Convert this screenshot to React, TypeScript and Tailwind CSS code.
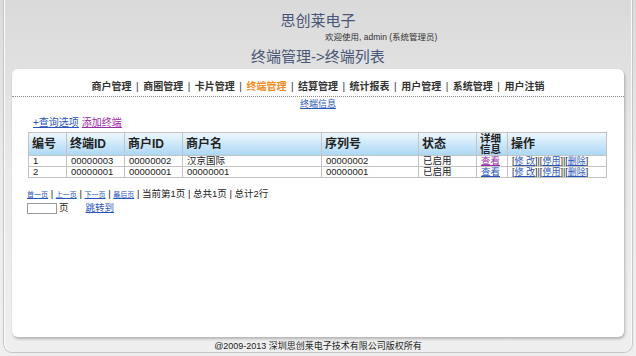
const navItems = ["商户管理", "商圈管理", "卡片管理", "终端管理", "结算管理", "统计报表", "用户管理", "系统管理", "用户注销"];

const rows = [
	{ no: "1", tid: "00000003", mid: "00000002", name: "汉京国际", serial: "00000002", status: "已启用" },
	{ no: "2", tid: "00000001", mid: "00000001", name: "00000001", serial: "00000001", status: "已启用" },
];

const thBase = "border border-[#c3c3c3] px-[3px] text-left align-middle font-bold text-[#222]";
const th = `${thBase} text-[12px] leading-[11px]`;
const td = "border border-[#c3c3c3] px-[4px] h-[11px] leading-[10px] text-[#222] whitespace-nowrap overflow-hidden";
const link = "text-[#2a55b8] underline";

export default function App() {
	return (
		<div className="h-[356px] w-[636px] overflow-hidden bg-gradient-to-b from-[#dadada] via-[#ebebeb] to-[#efefef] font-['Liberation_Sans','Noto_Sans_CJK_SC',sans-serif]">
			<div className="mx-[3px] flex h-[353px] flex-col rounded-b-[9px] border-x border-b border-[#c6c6c6] px-[8px] shadow-[inset_1px_0_0_#fafafa,inset_-1px_0_0_#fafafa]">
				<div className="flex h-[66px] flex-col items-center pt-[11px]">
					<div className="text-[15px] leading-[20px] text-[#4a5675]">思创莱电子</div>
					<div className="w-full pl-[313px] text-[8.5px] leading-[12px] text-[#333]">欢迎使用, admin (系统管理员)</div>
					<div className="mt-[4px] text-[15px] leading-[20px] text-[#4a5675]">终端管理-&gt;终端列表</div>
				</div>
				<div className="mt-[3px] flex h-[268px] flex-col rounded-[6px] bg-white shadow-[1px_2px_3px_rgba(0,0,0,0.25)]">
					<div className="flex h-[28px] items-end justify-center border-b border-dotted border-[#8a8a8a] pb-[3px] text-[10px] font-bold leading-[12px] text-[#333]">
						{navItems.map((item, i) => (
							<span key={item} className="flex items-center">
								{i > 0 ? <span className="mx-[4.5px] font-normal">|</span> : null}
								<span className={item === "终端管理" ? "text-[#f08a1c]" : ""}>{item}</span>
							</span>
						))}
					</div>
					<div className="mt-[1px] text-center text-[9px] leading-[12px]">
						<a className={link}>终端信息</a>
					</div>
					<div className="mt-[7px] pl-[21px] text-[10px] leading-[12px]">
						<a className={link}>+查询选项</a>
						<a className="ml-[3px] text-[#9b2aa6] underline">添加终端</a>
					</div>
					<div className="mt-[3px] pl-[16px]">
						<table className="w-[578px] table-fixed border-collapse">
							<colgroup>
								<col className="w-[38px]" />
								<col className="w-[58px]" />
								<col className="w-[58px]" />
								<col className="w-[139px]" />
								<col className="w-[97px]" />
								<col className="w-[58px]" />
								<col className="w-[31px]" />
								<col className="w-[99px]" />
							</colgroup>
							<thead>
								<tr className="h-[23px] bg-gradient-to-b from-[#eef7fd] to-[#a9d6f4]">
									<th className={th}>编号</th>
									<th className={th}>终端ID</th>
									<th className={th}>商户ID</th>
									<th className={th}>商户名</th>
									<th className={th}>序列号</th>
									<th className={th}>状态</th>
									<th className={`${thBase} text-[10.5px] leading-[11px]`}>
										详细
										<br />
										信息
									</th>
									<th className={th}>操作</th>
								</tr>
							</thead>
							<tbody>
								{rows.map((r) => (
									<tr key={r.no}>
										<td className={`${td} text-[9.5px]`}>{r.no}</td>
										<td className={`${td} text-[9.5px]`}>{r.tid}</td>
										<td className={`${td} text-[9.5px]`}>{r.mid}</td>
										<td className={`${td} text-[9.5px]`}>{r.name}</td>
										<td className={`${td} text-[9.5px]`}>{r.serial}</td>
										<td className={`${td} text-[9.5px]`}>{r.status}</td>
										<td className={`${td} text-[9.5px]`}>
											<a className={r.no === "1" ? "text-[#9b2aa6] underline" : link}>查看</a>
										</td>
										<td className={`${td} text-[9px]`}>
											[<a className={link}>修 改</a>]|[<a className={link}>停用</a>]|[<a className={link}>删除</a>]
										</td>
									</tr>
								))}
							</tbody>
						</table>
					</div>
					<div className="mt-[10px] pl-[15px] text-[9.5px] leading-[12px] text-[#222]">
						<a className={`${link} text-[7px]`}>首一页</a> | <a className={`${link} text-[7px]`}>上一页</a> |{" "}
						<a className={`${link} text-[7px]`}>下一页</a> | <a className={`${link} text-[7px]`}>最后页</a> | 当前第1页 | 总共1页 | 总计2行
					</div>
					<div className="mt-[1px] flex items-center pl-[15px] text-[9.5px] leading-[12px] text-[#222]">
						<input className="h-[11px] w-[30px] border border-[#999] bg-white" />
						<span className="ml-[2px]">页</span>
						<a className={`${link} ml-[17px]`}>跳转到</a>
					</div>
				</div>
				<div className="mt-[3px] text-center text-[9px] leading-[12px] text-[#222]">@2009-2013 深圳思创莱电子技术有限公司版权所有</div>
			</div>
		</div>
	);
}
